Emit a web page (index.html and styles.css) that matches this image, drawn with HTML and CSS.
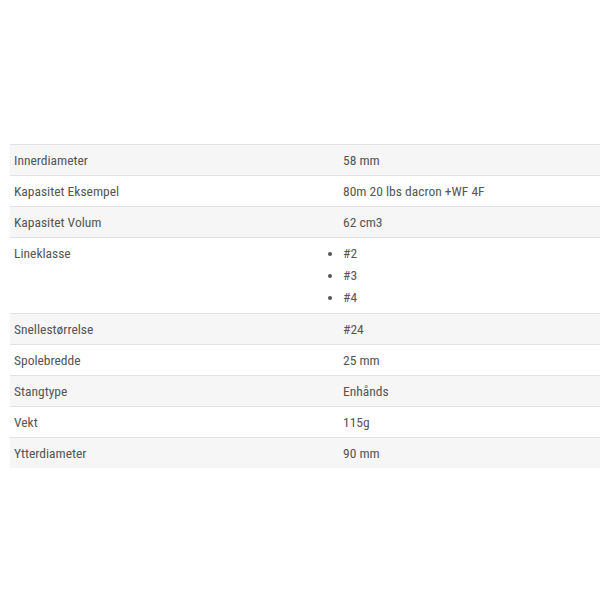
FILE: index.html
```html
<!DOCTYPE html>
<html>
<head>
<meta charset="utf-8">
<link rel="stylesheet" href="styles.css">
</head>
<body>
<div class="page">
<table class="specs">
<tbody>
<tr><td class="label">Innerdiameter</td><td class="value">58 mm</td></tr>
<tr><td class="label">Kapasitet Eksempel</td><td class="value">80m 20 lbs dacron +WF 4F</td></tr>
<tr><td class="label">Kapasitet Volum</td><td class="value">62 cm3</td></tr>
<tr><td class="label">Lineklasse</td><td class="value"><ul class="list"><li>#2</li><li>#3</li><li>#4</li></ul></td></tr>
<tr><td class="label">Snellestørrelse</td><td class="value">#24</td></tr>
<tr><td class="label">Spolebredde</td><td class="value">25 mm</td></tr>
<tr><td class="label">Stangtype</td><td class="value">Enhånds</td></tr>
<tr><td class="label">Vekt</td><td class="value">115g</td></tr>
<tr><td class="label">Ytterdiameter</td><td class="value">90 mm</td></tr>
</tbody>
</table>
</div>
</body>
</html>
```
FILE: styles.css
```css
html, body {
  margin: 0;
  padding: 0;
  background: #fff;
}
.page {
  padding: 144px 0 0 10px;
}
.specs {
  width: 590px;
  border-collapse: collapse;
  font-family: "Roboto Condensed", "Open Sans", sans-serif;
  font-size: 13.5px;
  color: #555;
}
.specs td {
  border-top: 1px solid #e2e2e2;
  padding: 4px 4px;
  line-height: 22px;
  vertical-align: top;
}
.specs tr:nth-child(odd) td {
  background: #f6f6f6;
}
.label {
  width: 321px;
}
.list {
  margin: 0 0 1px;
  padding: 0;
  list-style: disc outside;
}
.list li {
  line-height: 22px;
}
```
